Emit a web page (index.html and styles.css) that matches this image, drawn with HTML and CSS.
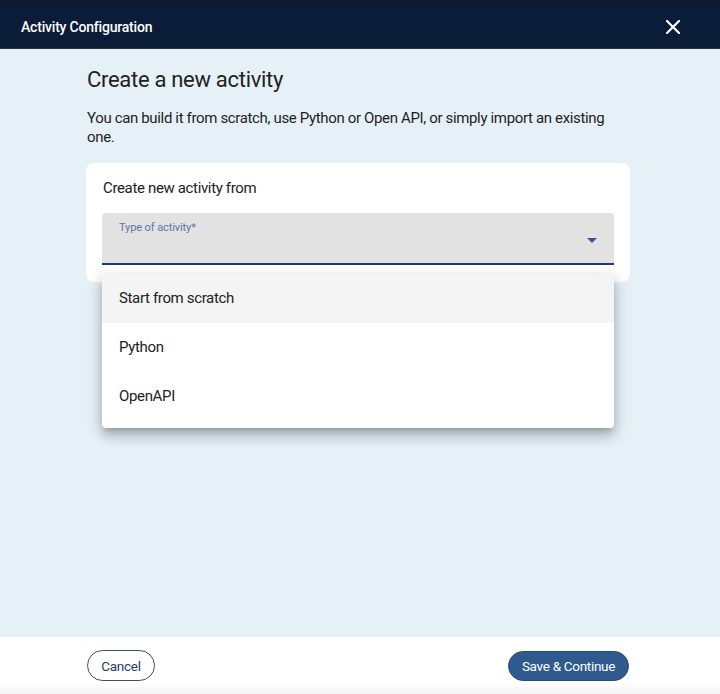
FILE: index.html
```html
<!DOCTYPE html>
<html lang="en">
<head>
<meta charset="utf-8">
<title>Activity Configuration</title>
<link rel="stylesheet" href="styles.css">
</head>
<body>
<div class="dialog">
  <div class="topstrip"></div>
  <header class="dialog-header">
    <span class="dialog-title">Activity Configuration</span>
    <button class="close-btn" aria-label="Close">
      <svg width="14" height="14" viewBox="0 0 14 14"><path d="M1 1 L13 13 M13 1 L1 13" stroke="#fff" stroke-width="2.2" stroke-linecap="square" fill="none"/></svg>
    </button>
  </header>
  <main class="dialog-body">
    <div class="content">
      <h1 class="title">Create a new activity</h1>
      <p class="intro">You can build it from scratch, use Python or Open API, or simply import an existing one.</p>
      <section class="card">
        <div class="card-label">Create new activity from</div>
        <div class="select-wrap">
          <div class="select">
            <span class="select-label">Type of activity*</span>
            <svg class="select-arrow" width="10" height="5" viewBox="0 0 10 5"><path d="M0 0 L10 0 L5 5 Z" fill="#2f5a8f"/></svg>
          </div>
          <ul class="menu">
            <li class="menu-item active">Start from scratch</li>
            <li class="menu-item">Python</li>
            <li class="menu-item">OpenAPI</li>
          </ul>
        </div>
      </section>
    </div>
  </main>
  <footer class="dialog-footer">
    <div class="footer-inner">
      <button class="btn btn-outline">Cancel</button>
      <button class="btn btn-primary">Save &amp; Continue</button>
    </div>
  </footer>
</div>
</body>
</html>
```
FILE: styles.css
```css
* { box-sizing: border-box; }
html, body { margin: 0; padding: 0; }
body {
  font-family: Roboto, "Noto Sans", "Liberation Sans", sans-serif;
  color: #1f1f1f;
  background: #e6f0f7;
}
.dialog {
  width: 720px;
  height: 694px;
  display: flex;
  flex-direction: column;
}
.topstrip {
  height: 5px;
  background: #0f1b2b;
}
.dialog-header {
  height: 44px;
  background: #0a1c38;
  border-bottom: 1px solid #2a3444;
  display: flex;
  align-items: center;
  justify-content: space-between;
  padding: 0 40px 0 21px;
}
.dialog-title {
  color: #fff;
  font-size: 14px;
  font-weight: 500;
  letter-spacing: -0.2px;
}
.close-btn {
  background: none;
  border: 0;
  padding: 0;
  width: 14px;
  height: 14px;
  display: flex;
  cursor: pointer;
}
.dialog-body {
  flex: 1;
  background: #e6f0f7;
  padding: 16px 0 0 86px;
}
.content {
  width: 544px;
}
.title {
  margin: 0;
  font-size: 22px;
  line-height: 30px;
  font-weight: 400;
  letter-spacing: -0.3px;
  color: #222;
  padding-left: 1px;
}
.intro {
  margin: 14px 0 0;
  padding-left: 1px;
  font-size: 15px;
  line-height: 19px;
  letter-spacing: -0.35px;
  color: #1f1f1f;
  width: 530px;
}
.card {
  margin-top: 16px;
  background: #fff;
  border-radius: 8px;
  padding: 16px 16px 17px;
}
.card-label {
  font-size: 15px;
  line-height: 18px;
  letter-spacing: -0.35px;
  padding-left: 1px;
  color: #222;
}
.select-wrap {
  position: relative;
  margin-top: 16px;
}
.select {
  height: 52px;
  background: #e2e2e2;
  border-radius: 4px 4px 0 0;
  border-bottom: 2px solid #1c3a73;
  position: relative;
  padding: 8px 17px 0;
}
.select-label {
  display: block;
  font-size: 11px;
  line-height: 14px;
  color: #5b77a5;
  letter-spacing: -0.1px;
}
.select-arrow {
  position: absolute;
  right: 17px;
  top: 25px;
}
.menu {
  position: absolute;
  top: 61px;
  left: 0;
  right: 0;
  margin: 0;
  padding: 0 0 7px;
  list-style: none;
  background: #fff;
  border-radius: 4px;
  box-shadow: 0 5px 6px -3px rgba(0,0,0,0.2), 0 9px 12px 1px rgba(0,0,0,0.14), 0 3px 16px 2px rgba(0,0,0,0.12);
  z-index: 10;
}
.menu-item {
  height: 49px;
  display: flex;
  align-items: center;
  padding: 0 17px 2px;
  font-size: 15px;
  letter-spacing: -0.35px;
  color: #222;
}
.menu-item.active {
  background: #f4f4f4;
  border-radius: 4px 4px 0 0;
}
.dialog-footer {
  height: 57px;
  background: linear-gradient(#fff 80%, #f4f4f4);
  padding: 13px 0 0 87px;
}
.footer-inner {
  width: 542px;
  display: flex;
  justify-content: space-between;
  align-items: flex-start;
}
.btn {
  font-family: Roboto, "Noto Sans", "Liberation Sans", sans-serif;
  font-size: 13.5px;
  letter-spacing: -0.3px;
  border-radius: 16px;
  cursor: pointer;
}
.btn-outline {
  width: 68px;
  height: 31px;
  background: #fff;
  border: 1px solid #34507a;
  color: #25406a;
}
.btn-primary {
  width: 121px;
  height: 30px;
  margin-top: 1px;
  background: #2e5a8e;
  border: 1px solid #264d7c;
  color: #fff;
}
```
